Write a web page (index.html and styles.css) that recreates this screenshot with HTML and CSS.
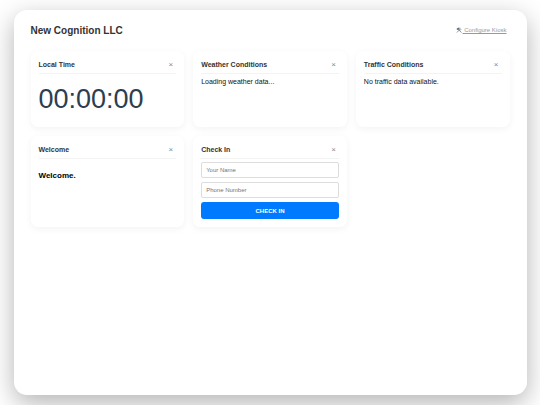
FILE: index.html
```html
<!DOCTYPE html>
<html lang="en">
<head>
    <meta charset="UTF-8">
    <meta name="viewport" content="width=device-width, initial-scale=1.0">
    <title>New Cognition LLC - Kiosk</title>
    <link rel="stylesheet" href="styles.css">
</head>
<body>
    <div class="kiosk-container">
        <header class="kiosk-header">
            <h1>New Cognition LLC</h1>
            <a href="#" class="config-link"><svg class="tools-icon" viewBox="0 0 16 16" aria-hidden="true">
                    <path d="M3 14 L11 5" stroke="#8a9aa5" stroke-width="2.5" stroke-linecap="round"/>
                    <path d="M11 1.500 A3 3 0 1 0 14.500 5.500" fill="none" stroke="#8a9aa5" stroke-width="2.200"/>
                    <path d="M6 6 L13.500 14" stroke="#c4703f" stroke-width="2.500" stroke-linecap="round"/>
                    <path d="M1 5.500 L6.500 1 L9 3.500 L4 8 Z" fill="#456579"/>
                </svg> Configure Kiosk</a>
        </header>

        <main class="widget-grid">
            <section class="widget">
                <div class="widget-header">
                    <h2>Local Time</h2>
                    <button type="button" class="close-btn" aria-label="Close Local Time">×</button>
                </div>
                <div class="clock" id="clock">00:00:00</div>
            </section>

            <section class="widget">
                <div class="widget-header">
                    <h2>Weather Conditions</h2>
                    <button type="button" class="close-btn" aria-label="Close Weather Conditions">×</button>
                </div>
                <p>Loading weather data...</p>
            </section>

            <section class="widget">
                <div class="widget-header">
                    <h2>Traffic Conditions</h2>
                    <button type="button" class="close-btn" aria-label="Close Traffic Conditions">×</button>
                </div>
                <p>No traffic data available.</p>
            </section>

            <section class="widget">
                <div class="widget-header">
                    <h2>Welcome</h2>
                    <button type="button" class="close-btn" aria-label="Close Welcome">×</button>
                </div>
                <h3 class="welcome-message">Welcome.</h3>
            </section>

            <section class="widget">
                <div class="widget-header">
                    <h2>Check In</h2>
                    <button type="button" class="close-btn" aria-label="Close Check In">×</button>
                </div>
                <form class="checkin-form" id="checkinForm">
                    <input type="text" id="name" placeholder="Your Name" aria-label="Your Name" required>
                    <input type="tel" id="phone" placeholder="Phone Number" aria-label="Phone Number" required>
                    <button type="submit" class="checkin-btn">Check In</button>
                </form>
            </section>
        </main>
    </div>
</body>
</html>
```

FILE: styles.css
```css
* {
    box-sizing: border-box;
}

body {
    font-family: "Liberation Sans", Arial, sans-serif;
    font-size: 7px;
    margin: 0;
    height: 100vh;
    display: flex;
    justify-content: center;
    align-items: center;
    background: #fff;
}

h1,
h2,
h3,
p {
    margin: 0;
}

.kiosk-container {
    width: 95%;
    height: 95%;
    padding: 12px 17px;
    background: #fff;
    border-radius: 13px;
    box-shadow: 0 8px 26px rgba(0, 0, 0, 0.3);
}

.kiosk-header {
    display: flex;
    justify-content: space-between;
    align-items: center;
    height: 16px;
    margin-bottom: 13px;
    padding-right: 3px;
}

.kiosk-header h1 {
    font-size: 10px;
    color: #333;
}

.config-link {
    font-size: 6px;
    color: #999;
    text-decoration: underline;
}

.tools-icon {
    width: 6px;
    height: 6px;
    vertical-align: -1px;
}

.widget-grid {
    display: grid;
    grid-template-columns: repeat(3, 1fr);
    gap: 9px;
}

.widget {
    padding: 8px;
    background: #fff;
    border-radius: 7px;
    box-shadow: 0 2px 7px rgba(0, 0, 0, 0.05);
}

.widget-header {
    display: flex;
    justify-content: space-between;
    align-items: center;
    height: 15px;
    padding: 0 3px 3px 0;
    margin-bottom: 3px;
    border-bottom: 1px solid #f3f3f3;
}

.widget-header h2 {
    font-size: 7px;
    color: #333;
}

.close-btn {
    padding: 0;
    border: none;
    background: none;
    font-family: inherit;
    font-size: 8px;
    line-height: 8px;
    color: #888;
    cursor: pointer;
}

.widget p {
    line-height: 10px;
    color: #111;
}

.clock {
    padding: 7px 0 4px;
    font-size: 27px;
    line-height: 31px;
    color: #2c3e50;
}

.welcome-message {
    margin-top: 12px;
    font-size: 8px;
}

.checkin-form {
    display: flex;
    flex-direction: column;
    gap: 4px;
}

.checkin-form input {
    width: 100%;
    height: 16px;
    padding: 0 4px;
    border: 1px solid #ddd;
    border-radius: 2px;
    font-family: inherit;
    font-size: 6px;
}

.checkin-form input::placeholder {
    color: #757575;
}

.checkin-btn {
    height: 17px;
    border: none;
    border-radius: 3px;
    background: #007bff;
    color: #fff;
    font-family: inherit;
    font-size: 6px;
    font-weight: bold;
    text-transform: uppercase;
    cursor: pointer;
}
```
